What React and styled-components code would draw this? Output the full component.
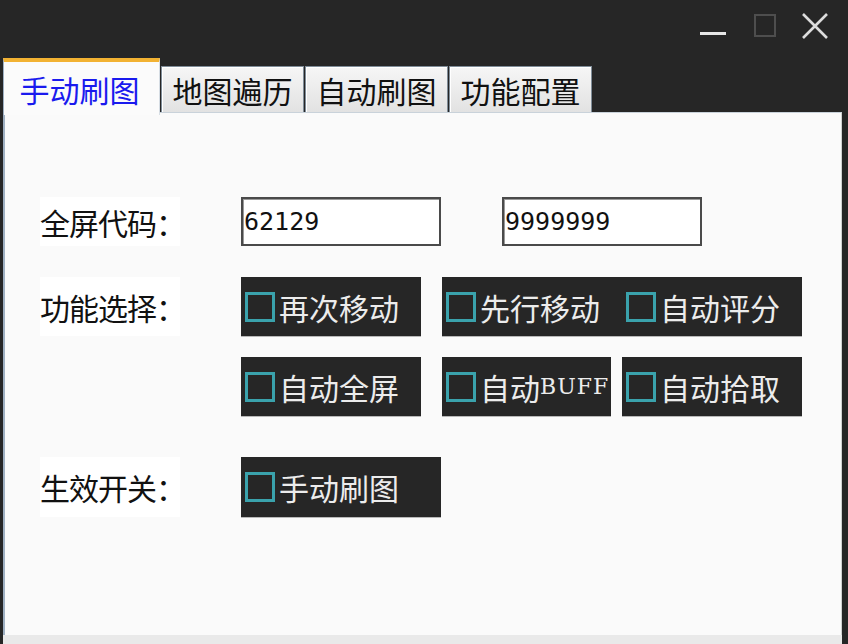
import React from "react";
import styled, { createGlobalStyle } from "styled-components";

const Global = createGlobalStyle`
  html, body { margin: 0; padding: 0; background: #262626; }
  body { font-family: "Noto Sans CJK SC", "Noto Sans", sans-serif; }
`;

const Window = styled.div`
  width: 848px;
  height: 644px;
  background: #262626;
  display: flex;
  flex-direction: column;
  overflow: hidden;
`;

const TitleBar = styled.div`
  height: 58px;
  flex: none;
  display: flex;
  justify-content: flex-end;
  align-items: flex-start;
  padding-right: 8px;
`;

const WinButton = styled.button`
  width: 51px;
  height: 50px;
  border: 0;
  background: transparent;
  padding: 0;
  display: flex;
  align-items: center;
  justify-content: center;
  svg { display: block; }
`;

const TabStrip = styled.div`
  flex: none;
  display: flex;
  align-items: flex-end;
  padding-left: 3px;
  height: 57px;
  margin-bottom: -3px;
  position: relative;
  z-index: 1;
`;

const Tab = styled.div`
  box-sizing: border-box;
  display: flex;
  align-items: center;
  justify-content: center;
  font-size: 30px;
  line-height: 1;
  white-space: nowrap;
  ${(p) =>
    p.$active
      ? `
    width: 157px;
    height: 57px;
    padding: 1px 4px 0 0;
    background: #fbfbfb;
    color: #1a1aee;
    border-top: 4px solid #f2b232;
    border-left: 1px solid #9fb0c2;
    border-right: 1px solid #d6dde4;
  `
      : `
    width: 143px;
    height: 46px;
    margin-left: 1px;
    margin-bottom: 3px;
    background: linear-gradient(#f6f6f6, #e2e2e2);
    color: #111;
    border: 1px solid #7f8c98;
    border-bottom: none;
    box-shadow: inset 1px 1px 0 #ffffff;
  `}
`;

const Panel = styled.div`
  flex: 1;
  margin: 0 6px 0 3px;
  background: #fafafa;
  border-top: 1px solid #c9d2da;
  border-left: 2px solid #9fb0c2;
  border-right: 1px solid #d0d0d0;
  padding: 84px 0 0 35px;
  display: flex;
  flex-direction: column;
`;

const BottomStrip = styled.div`
  flex: none;
  height: 9px;
  margin: 0 6px 0 3px;
  background: #e9e9e9;
`;

const Row = styled.div`
  display: flex;
  align-items: stretch;
  height: ${(p) => p.$h}px;
  margin-top: ${(p) => p.$gap || 0}px;
`;

const Label = styled.div`
  width: 140px;
  flex: none;
  box-sizing: border-box;
  margin-right: 61px;
  background: ${(p) => (p.$blank ? "transparent" : "#ffffff")};
  display: flex;
  align-items: center;
  font-size: 30px;
  letter-spacing: -1px;
  color: #111;
  white-space: nowrap;
`;

const Controls = styled.div`
  display: flex;
  align-items: stretch;
`;

const TextBox = styled.div`
  box-sizing: border-box;
  width: 200px;
  height: 49px;
  margin-right: ${(p) => p.$mr || 0}px;
  background: #fff;
  border: 2px solid #4a4a4a;
  box-shadow: inset 1px 1px 0 #9a9a9a;
  display: flex;
  align-items: center;
  padding-left: 1px;
  font-family: "DejaVu Sans Mono", "Liberation Mono", monospace;
  font-size: 25px;
  color: #111;
`;

const CheckButton = styled.label`
  box-sizing: border-box;
  width: ${(p) => p.$w}px;
  margin-right: ${(p) => p.$mr || 0}px;
  background: #262626;
  box-shadow: 0 1px 0 #b8b8b8;
  display: flex;
  align-items: center;
  padding-left: 4px;
  color: #ececec;
  font-size: 30px;
  white-space: nowrap;
  line-height: 1;
`;

const Box = styled.span`
  width: 30px;
  height: 30px;
  box-sizing: border-box;
  border: 3px solid #3aa2ac;
  margin-right: 4px;
  flex: none;
`;

const Latin = styled.span`
  font-family: "DejaVu Serif", "Liberation Serif", serif;
  font-size: 22px;
  letter-spacing: 1px;
`;

function Check({ w, mr, children }) {
  return (
    <CheckButton $w={w} $mr={mr}>
      <Box />
      {children}
    </CheckButton>
  );
}

export default function App() {
  return (
    <>
      <Global />
      <Window>
        <TitleBar>
          <WinButton aria-label="minimize">
            <svg width="28" height="28" viewBox="0 0 28 28">
              <rect x="1" y="21" width="26" height="3" fill="#e6e6e6" />
            </svg>
          </WinButton>
          <WinButton aria-label="maximize">
            <svg width="28" height="28" viewBox="0 0 28 28">
              <rect x="5" y="4" width="20" height="21" fill="none" stroke="#4e4e4e" strokeWidth="2" />
            </svg>
          </WinButton>
          <WinButton aria-label="close">
            <svg width="28" height="28" viewBox="0 0 28 28">
              <path d="M2 3 L26 27 M26 3 L2 27" stroke="#dcdcdc" strokeWidth="2.6" />
            </svg>
          </WinButton>
        </TitleBar>
        <TabStrip>
          <Tab $active>手动刷图</Tab>
          <Tab>地图遍历</Tab>
          <Tab>自动刷图</Tab>
          <Tab>功能配置</Tab>
        </TabStrip>
        <Panel>
          <Row $h={49}>
            <Label>全屏代码：</Label>
            <Controls>
              <TextBox $mr={61}>62129</TextBox>
              <TextBox>9999999</TextBox>
            </Controls>
          </Row>
          <Row $h={59} $gap={31}>
            <Label>功能选择：</Label>
            <Controls>
              <Check w={180} mr={21}>再次移动</Check>
              <Check w={180}>先行移动</Check>
              <Check w={180}>自动评分</Check>
            </Controls>
          </Row>
          <Row $h={59} $gap={21}>
            <Label $blank />
            <Controls>
              <Check w={180} mr={21}>自动全屏</Check>
              <Check w={169} mr={11}>
                自动<Latin>BUFF</Latin>
              </Check>
              <Check w={180}>自动拾取</Check>
            </Controls>
          </Row>
          <Row $h={60} $gap={41}>
            <Label>生效开关：</Label>
            <Controls>
              <Check w={200}>手动刷图</Check>
            </Controls>
          </Row>
        </Panel>
        <BottomStrip />
      </Window>
    </>
  );
}
